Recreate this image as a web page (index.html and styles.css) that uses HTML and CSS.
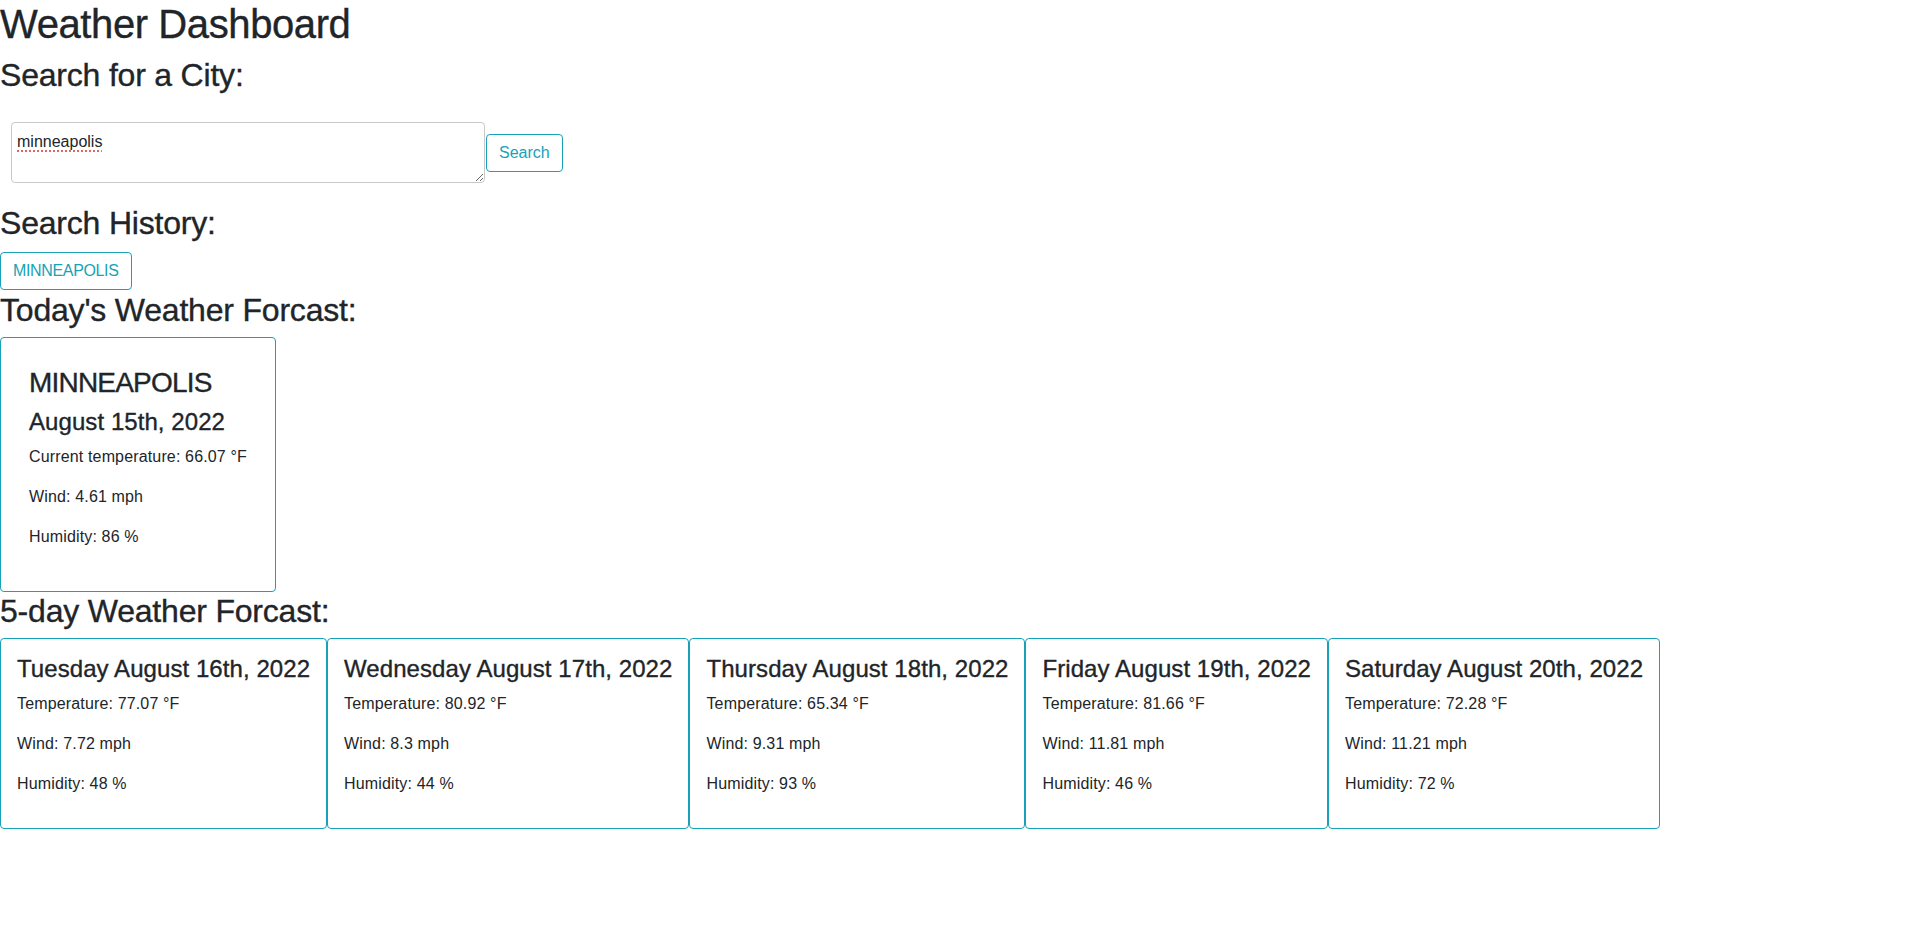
FILE: index.html
```html
<!DOCTYPE html>
<html lang="en">
<head>
<meta charset="utf-8">
<title>Weather Dashboard</title>
<link rel="stylesheet" href="styles.css">
</head>
<body>
  <h1 class="title">Weather Dashboard</h1>
  <h2 class="section-title">Search for a City:</h2>
  <form class="search-form">
    <textarea class="city-input">minneapolis</textarea>
    <button type="button" class="btn-outline">Search</button>
  </form>
  <h2 class="section-title">Search History:</h2>
  <div class="history">
    <button type="button" class="btn-outline btn-caps">MINNEAPOLIS</button>
  </div>
  <h2 class="section-title">Today's Weather Forcast:</h2>
  <div class="today-card">
    <h3 class="city-name">MINNEAPOLIS</h3>
    <h4 class="card-title">August 15th, 2022</h4>
    <p>Current temperature: 66.07 °F</p>
    <p>Wind: 4.61 mph</p>
    <p>Humidity: 86 %</p>
  </div>
  <h2 class="section-title">5-day Weather Forcast:</h2>
  <div class="forecast-row">
    <div class="forecast-card">
      <h4 class="card-title">Tuesday August 16th, 2022</h4>
      <p>Temperature: 77.07 °F</p>
      <p>Wind: 7.72 mph</p>
      <p>Humidity: 48 %</p>
    </div>
    <div class="forecast-card">
      <h4 class="card-title">Wednesday August 17th, 2022</h4>
      <p>Temperature: 80.92 °F</p>
      <p>Wind: 8.3 mph</p>
      <p>Humidity: 44 %</p>
    </div>
    <div class="forecast-card">
      <h4 class="card-title">Thursday August 18th, 2022</h4>
      <p>Temperature: 65.34 °F</p>
      <p>Wind: 9.31 mph</p>
      <p>Humidity: 93 %</p>
    </div>
    <div class="forecast-card">
      <h4 class="card-title">Friday August 19th, 2022</h4>
      <p>Temperature: 81.66 °F</p>
      <p>Wind: 11.81 mph</p>
      <p>Humidity: 46 %</p>
    </div>
    <div class="forecast-card">
      <h4 class="card-title">Saturday August 20th, 2022</h4>
      <p>Temperature: 72.28 °F</p>
      <p>Wind: 11.21 mph</p>
      <p>Humidity: 72 %</p>
    </div>
  </div>
</body>
</html>
```
FILE: styles.css
```css
* {
  box-sizing: border-box;
}

body {
  margin: 0;
  font-family: "Liberation Sans", Arial, sans-serif;
  font-size: 16px;
  line-height: 1.5;
  color: #212529;
  background: #fff;
}

h1, h2, h3, h4 {
  margin: 0 0 8px;
  font-weight: 500;
  line-height: 1.2;
  -webkit-text-stroke: 0.35px currentColor;
}

p {
  margin: 0 0 16px;
  letter-spacing: 0.15px;
}

.title {
  font-size: 40px;
  letter-spacing: -0.4px;
}

.section-title {
  font-size: 32px;
  letter-spacing: -0.2px;
}

.city-name {
  font-size: 28px;
  letter-spacing: -0.8px;
}

.card-title {
  font-size: 24px;
  letter-spacing: 0.07px;
}

.search-form {
  display: flex;
  align-items: center;
  gap: 1px;
  padding: 20px 0 21px 11px;
  margin: 0;
}

.city-input {
  width: 474px;
  height: 61px;
  padding: 7px 5px 5px;
  border: 1px solid #c9c9c9;
  border-radius: 4px;
  font-family: "Liberation Sans", Arial, sans-serif;
  font-size: 16px;
  line-height: 1.5;
  color: #212529;
  background: #fff;
  text-decoration: underline dotted #d9413a;
  text-underline-offset: 3px;
}

.btn-outline {
  display: inline-block;
  padding: 6px 12px;
  font-family: "Liberation Sans", Arial, sans-serif;
  font-size: 16px;
  line-height: 1.5;
  color: #17a2b8;
  background: transparent;
  border: 1px solid #17a2b8;
  border-radius: 4px;
  cursor: pointer;
}

.btn-caps {
  letter-spacing: -0.35px;
}

.history {
  display: flex;
  padding: 1px 0;
}

.today-card {
  width: fit-content;
  padding: 28px 28px 26px;
  border: 1px solid #17a2b8;
  border-radius: 4px;
}

.forecast-row {
  display: flex;
  align-items: flex-start;
}

.forecast-card {
  padding: 16px;
  border: 1px solid #17a2b8;
  border-radius: 4px;
  white-space: nowrap;
}
```
